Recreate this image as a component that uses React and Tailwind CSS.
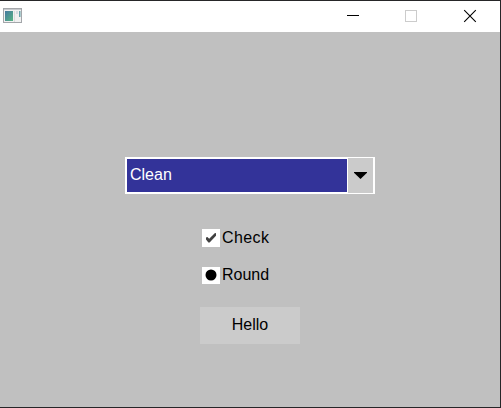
function TitleBar() {
  return (
    <header className="flex h-[31px] shrink-0 items-start bg-white">
      <svg className="ml-[3px] mt-[7px]" width="19" height="17" viewBox="0 0 19 17">
        <defs>
          <linearGradient id="app" x1="0" y1="0" x2="1" y2="1">
            <stop offset="0" stopColor="#4478a0" />
            <stop offset="1" stopColor="#57b583" />
          </linearGradient>
        </defs>
        <rect x="0.5" y="0.5" width="18" height="14" fill="#f1f1f1" stroke="#a3a6aa" />
        <path d="M1 1.5h17" stroke="#c6c9cd" />
        <rect x="2" y="3" width="8" height="10" fill="url(#app)" />
        <path d="M11.5 3v11" stroke="#dcdcdc" />
        <rect x="13" y="3" width="2" height="3" fill="#d5dce2" />
        <rect x="16" y="3" width="1.5" height="6" fill="#6aa5ab" />
      </svg>
      <div className="flex-1" />
      <svg className="mt-[8px]" width="130" height="14" viewBox="0 0 130 14" shapeRendering="crispEdges">
        <path d="M0 6.5h12" stroke="#000" />
        <rect x="58.5" y="1.5" width="11" height="11" fill="none" stroke="#ccc" />
        <path d="M117.2 1.2l11.6 11.6M128.8 1.2l-11.6 11.6" stroke="#000" strokeWidth="1.1" shapeRendering="auto" />
      </svg>
      <div className="w-[23px]" />
    </header>
  );
}

function ComboBox() {
  return (
    <button className="mt-[125px] flex h-[37px] w-[250px] bg-white text-left">
      <span className="ml-[2px] mt-[2px] h-[33px] w-[220px] bg-[#333399] pl-[3px] leading-[32px] text-white">
        Clean
      </span>
      <span className="ml-px mt-px flex h-[35px] w-[25px] items-center justify-center bg-[#cbcbcb]">
        <svg width="13" height="7" viewBox="0 0 13 7">
          <path d="M0 0h13v0.8L6.5 7L0 0.8z" fill="#000" />
        </svg>
      </span>
    </button>
  );
}

export default function App() {
  return (
    <div className="flex h-[408px] w-[501px] flex-col border-b border-r border-t border-[#262628] bg-[#c0c0c0] font-['Liberation_Sans',Arial,sans-serif] text-[16px] text-black">
      <TitleBar />
      <main className="flex flex-1 flex-col items-start pl-[125px]">
        <ComboBox />
        <label className="ml-[77px] mt-[35px] flex h-[18px] items-center gap-[2px] leading-[18px]">
          <span className="h-[18px] w-[18px] bg-white">
            <svg width="18" height="18" viewBox="0 0 18 18">
              <path d="M4 8.6L5.4 8L7.2 9.8L13 4L14 4.2V6.8L7.6 13.6L6.4 13.6L4 10.6Z" fill="#404040" />
            </svg>
          </span>
          <span className="tracking-[0.4px]">Check</span>
        </label>
        <label className="ml-[77px] mt-[20px] flex h-[17px] items-center gap-[2px] leading-[17px]">
          <span className="flex h-[17px] w-[18px] items-center justify-center bg-white">
            <svg width="18" height="17" viewBox="0 0 18 17">
              <circle cx="9" cy="8" r="5.5" fill="#000" />
            </svg>
          </span>
          <span className="pb-[2px]">Round</span>
        </label>
        <button className="ml-[75px] mt-[23px] h-[37px] w-[100px] bg-[#cbcbcb] pb-[2px]">Hello</button>
      </main>
    </div>
  );
}
